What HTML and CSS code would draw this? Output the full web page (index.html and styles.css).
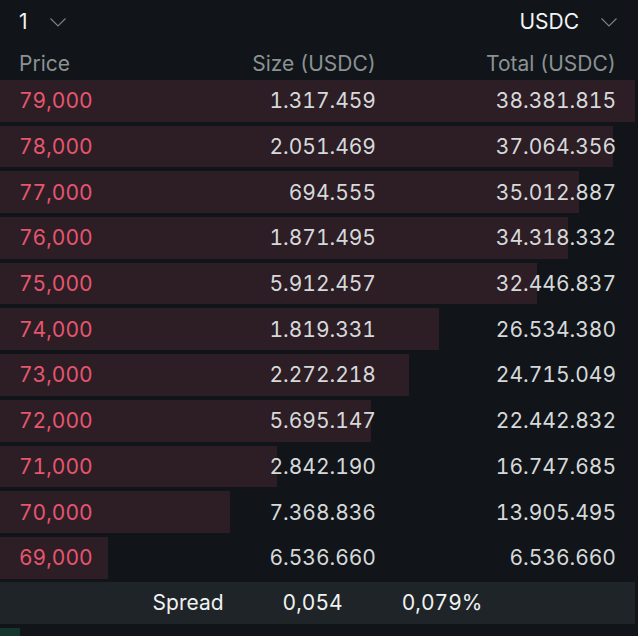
FILE: index.html
```html
<!DOCTYPE html>
<html lang="en">
<head>
    <meta charset="UTF-8">
    <meta name="viewport" content="width=device-width, initial-scale=1.0">
    <title>Order Book</title>
    <link rel="stylesheet" href="styles.css">
</head>
<body>

    <div class="book">
        <div class="toolbar">
            <button class="select">1
                <svg width="16" height="9" viewBox="0 0 16 9"><path d="M0.5 0.5 L8 8 L15.5 0.5" /></svg>
            </button>
            <button class="select">USDC
                <svg width="16" height="9" viewBox="0 0 16 9"><path d="M0.5 0.5 L8 8 L15.5 0.5" /></svg>
            </button>
        </div>

        <div class="row head">
            <span>Price</span>
            <span>Size (USDC)</span>
            <span>Total (USDC)</span>
        </div>

        <div class="asks">
            <div class="row ask" style="--depth: 100%"><span class="price">79,000</span><span>1.317.459</span><span>38.381.815</span></div>
            <div class="row ask" style="--depth: 96.57%"><span class="price">78,000</span><span>2.051.469</span><span>37.064.356</span></div>
            <div class="row ask" style="--depth: 91.22%"><span class="price">77,000</span><span>694.555</span><span>35.012.887</span></div>
            <div class="row ask" style="--depth: 89.41%"><span class="price">76,000</span><span>1.871.495</span><span>34.318.332</span></div>
            <div class="row ask" style="--depth: 84.54%"><span class="price">75,000</span><span>5.912.457</span><span>32.446.837</span></div>
            <div class="row ask" style="--depth: 69.13%"><span class="price">74,000</span><span>1.819.331</span><span>26.534.380</span></div>
            <div class="row ask" style="--depth: 64.39%"><span class="price">73,000</span><span>2.272.218</span><span>24.715.049</span></div>
            <div class="row ask" style="--depth: 58.47%"><span class="price">72,000</span><span>5.695.147</span><span>22.442.832</span></div>
            <div class="row ask" style="--depth: 43.64%"><span class="price">71,000</span><span>2.842.190</span><span>16.747.685</span></div>
            <div class="row ask" style="--depth: 36.23%"><span class="price">70,000</span><span>7.368.836</span><span>13.905.495</span></div>
            <div class="row ask" style="--depth: 17.03%"><span class="price">69,000</span><span>6.536.660</span><span>6.536.660</span></div>
        </div>

        <div class="spread">
            <span>Spread</span>
            <span>0,054</span>
            <span>0,079%</span>
        </div>

        <!-- first bid row, only its depth bar is in view -->
        <div class="bids">
            <div class="row bid" style="--depth: 3.15%"></div>
        </div>
    </div>

</body>
</html>
```

FILE: styles.css
```css
html, body { margin: 0; height: 100%; overflow: hidden; }
body { background: #111519; font-family: Inter, "Noto Sans", sans-serif; color: #d6d9da; font-size: 21px; }
.book { width: 635px; height: 100vh; overflow: hidden; }

.toolbar { display: flex; justify-content: space-between; height: 42px; align-items: center; padding: 0 18px 0 19px; }
.select {
    display: flex; align-items: center; gap: 22px; padding: 0; border: none; background: none;
    font: inherit; color: #f2f4f4; cursor: pointer;
}
.select svg { fill: none; stroke: #7d8586; stroke-width: 1.1; margin-top: 3px; }

.row {
    display: grid; grid-template-columns: 1fr 240px 240px; align-items: center;
    padding: 0 19px; height: 41.7px;
    font-variant-numeric: tabular-nums;
}
.row span:not(:first-child) { text-align: right; }
.head { color: #8a9293; height: 38px; padding-top: 4px; box-sizing: border-box; }

.asks, .bids { display: flex; flex-direction: column; gap: 4px; }
.ask { background: linear-gradient(to right, #2d1d25 var(--depth), transparent var(--depth)); }
.ask .price { color: #e5566f; }
.bid { background: linear-gradient(to right, #15362c var(--depth), transparent var(--depth)); }

.spread {
    display: flex; justify-content: center; align-items: center; gap: 59px;
    height: 42px; margin: 3px 0 4px; background: #1f2428; color: #f0f2f2;
    font-variant-numeric: tabular-nums;
}
```
